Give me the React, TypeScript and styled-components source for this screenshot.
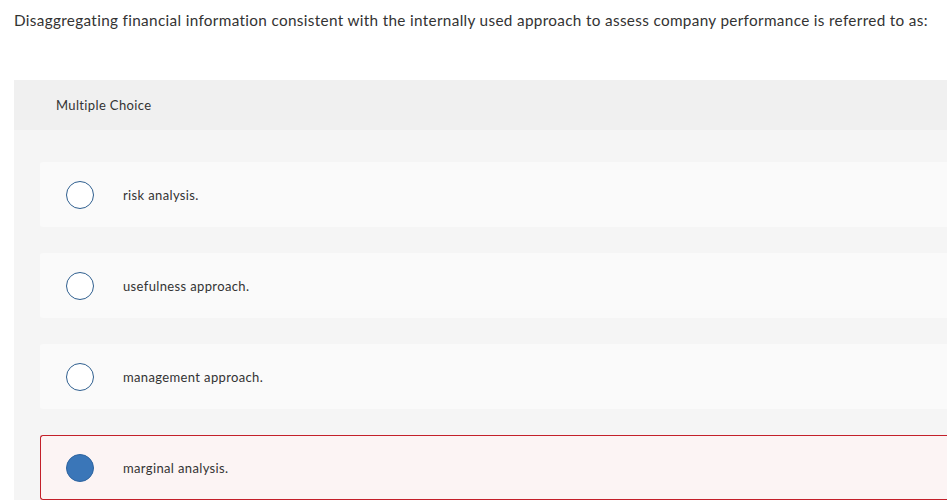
import React from "react";
import styled, { createGlobalStyle } from "styled-components";

const GlobalStyle = createGlobalStyle`
  html, body {
    margin: 0;
    padding: 0;
    background: #ffffff;
    overflow: hidden;
  }
  body {
    font-family: Lato, "Open Sans", "Liberation Sans", sans-serif;
    color: #333333;
    letter-spacing: 0.36px;
  }
`;

const options = [
  { id: "a", label: "risk analysis.", selected: false },
  { id: "b", label: "usefulness approach.", selected: false },
  { id: "c", label: "management approach.", selected: false },
  { id: "d", label: "marginal analysis.", selected: true },
];

export default function App() {
  return (
    <>
      <GlobalStyle />
      <Page>
        <Question>
          Disaggregating financial information consistent with the internally used approach to assess company
          performance is referred to as:
        </Question>
        <Panel>
          <PanelHeader>Multiple Choice</PanelHeader>
          <OptionList>
            {options.map((o) => (
              <OptionCard key={o.id} $selected={o.selected}>
                <Radio $checked={o.selected} />
                <OptionLabel>{o.label}</OptionLabel>
              </OptionCard>
            ))}
          </OptionList>
        </Panel>
      </Page>
    </>
  );
}

/* Styles */

const Page = styled.div`
  display: flex;
  flex-direction: column;
  width: 947px;
  height: 500px;
  overflow: hidden;
`;

const Question = styled.p`
  margin: 0;
  padding: 10px 0 0 14px;
  font-size: 15.3px;
  line-height: 20px;
  letter-spacing: 0.33px;
  white-space: nowrap;
  color: #333333;
`;

const Panel = styled.section`
  margin: 50px 0 0 14px;
  display: flex;
  flex-direction: column;
  background: #f5f5f5;
`;

const PanelHeader = styled.div`
  height: 50px;
  display: flex;
  align-items: center;
  padding-left: 42px;
  background: #f0f0f0;
  font-size: 13px;
  color: #333333;
`;

const OptionList = styled.div`
  display: flex;
  flex-direction: column;
  gap: 26px;
  padding: 32px 0 32px 26px;
`;

const OptionCard = styled.div<{ $selected?: boolean }>`
  box-sizing: border-box;
  height: 65px;
  display: flex;
  align-items: center;
  gap: 29px;
  padding-left: 25px;
  border-radius: 3px 0 0 3px;
  background: ${(p) => (p.$selected ? "#fcf4f4" : "#fafafa")};
  border: 1px solid ${(p) => (p.$selected ? "#c3202a" : "transparent")};
  border-right: none;
`;

const Radio = styled.span<{ $checked?: boolean }>`
  box-sizing: border-box;
  flex: none;
  width: 28px;
  height: 28px;
  border-radius: 50%;
  border: 1.5px solid ${(p) => (p.$checked ? "#2d64a0" : "#2f5f8f")};
  background: ${(p) => (p.$checked ? "#3a76b8" : "#ffffff")};
`;

const OptionLabel = styled.span`
  font-size: 13px;
  color: #333333;
`;
